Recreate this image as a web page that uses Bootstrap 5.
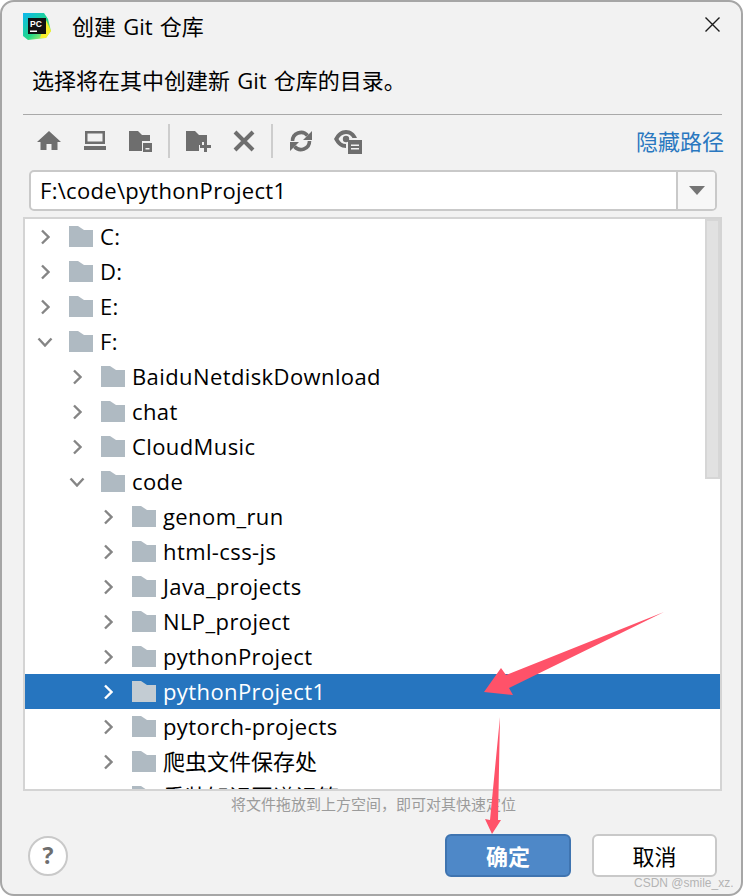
<!DOCTYPE html>
<html lang="zh">
<head>
<meta charset="utf-8">
<title>创建 Git 仓库</title>
<link rel="stylesheet" href="https://cdn.jsdelivr.net/npm/bootstrap@5.3.0/dist/css/bootstrap.min.css">
<style>
html,body{height:896px;margin:0;overflow:hidden;background:#fff}
body{font-family:"Open Sans","Noto Sans CJK SC",sans-serif;font-size:22px;color:#000;position:relative}
.win{width:743px;height:896px;border:2px solid #a6a6a6;border-radius:14px;background:#f2f2f2;overflow:hidden}
.titlebar{height:54px;padding:0 0 0 21px}
.pc-logo{width:28px;height:28px;margin-top:-6px}
.ttl{margin-left:21px;margin-top:-5px;word-spacing:1.5px}
.close-x{position:absolute;left:705px;top:17px;width:15px;height:15px}
.prompt{height:58px;padding:0 0 10px 30px;align-items:center;word-spacing:1.5px}
.rule{height:1px;background:#a9a9a9;margin:0 19px 0 21px}
.tools{height:55px;padding:0 0 3px 35px;margin-right:17px}
.tool{width:24px;height:24px;overflow:visible;color:#6e6e6e}
.tool+.tool{margin-left:22px}
.vsep{width:2px;height:34px;background:#cdcdcd;margin:0 16px 0 15px}
.hide-link{color:#2a78c0;text-decoration:none}
.pathbox{height:41px;margin:0 24px 0 27px;border:2px solid #c9c9c9;border-radius:5px;background:#fff;overflow:hidden}
.pathtxt{padding-left:9px;line-height:37px;letter-spacing:.3px}
.drop{width:39px;border-left:2px solid #c9c9c9;background:#f7f7f7}
.tri{width:0;height:0;border-left:8px solid transparent;border-right:8px solid transparent;border-top:9px solid #757575}
.treebox{height:574px;margin:6px 19px 0 21px;border:2px solid #d4d4d4;background:#fff;overflow:hidden;position:relative}
.rowi{height:35px;line-height:35px;white-space:nowrap;letter-spacing:.4px;color:#000}
.cjk{letter-spacing:0}
.l0{padding-left:15px}.l1{padding-left:47px}.l2{padding-left:78px}
.chev{width:10px;height:16px;flex:none;color:#858585}
.chev-d{width:16px;height:10px;flex:none;margin-left:-3px;margin-right:-3px;color:#858585}
.fold{width:24px;height:21px;flex:none;margin-left:19px;margin-right:7px;color:#afbac2}
.sel{background:#2675bf;color:#fff}
.sel .chev{color:#fff}
.sel .fold{color:#c3ccd3}
.thumb{position:absolute;left:680px;top:0;width:15px;height:260px;background:#e1e1e1;border:2px solid #d6d6d6}
.hint{font-size:15px;color:#9b9b9b;line-height:20px;margin-top:3px;padding-left:229px}
.foot{padding:20px 24px 0 26px}
.helpb{width:40px;height:40px;border-radius:50%;border:2px solid #c9c9c9;background:#fff;color:#6e6e6e;font-weight:700;font-size:23px;line-height:1;padding:0}
.btn-ok,.btn-no{height:43px;border-radius:6px;font-size:22px;line-height:1;padding:0}
.btn-ok{width:126px;background:#4e88c8;border:2px solid #3f74b0;color:#fff;font-weight:700;margin-right:21px}
.btn-no{width:125px;background:#fff;border:2px solid #c9c9c9;color:#000}
.arrows{position:absolute;left:0;top:0;pointer-events:none}
.wm{position:absolute;left:634px;top:875px;font-size:12px;color:#b4b4b4;line-height:16px;font-family:"Liberation Sans",sans-serif}
</style>
</head>
<body>
<svg width="0" height="0" class="position-absolute">
<symbol id="f" viewBox="0 0 24 21"><path d="M0 0h9l6 4h9v17H0z" fill="currentColor"/></symbol>
<symbol id="c" viewBox="0 0 10 16"><path d="M2 1.500 8.500 8 2 14.500" fill="none" stroke="currentColor" stroke-width="2.400"/></symbol>
<symbol id="d" viewBox="0 0 16 10"><path d="M1.500 1.500 8 8.500l6.500-7" fill="none" stroke="currentColor" stroke-width="2.400"/></symbol>
</svg>
<div class="win d-flex flex-column">
  <div class="titlebar d-flex align-items-center">
    <svg class="pc-logo" viewBox="0 0 28 28">
      <defs><linearGradient id="lg" x1="0" y1="0" x2="1" y2="1"><stop offset="0" stop-color="#0db7f0"/><stop offset=".55" stop-color="#21d789"/><stop offset="1" stop-color="#fcf84a"/></linearGradient></defs>
      <path d="M0 1h21l4 6 3 12-5 7-18 2-5-4z" fill="url(#lg)"/>
      <path d="M23 8l5 11-5 7h-6z" fill="#f7ee2e"/>
      <rect x="5" y="6" width="18" height="16" fill="#111"/>
      <rect x="7" y="18.500" width="7" height="1.500" fill="#fff"/>
      <text x="7" y="14.500" font-size="8.500" font-weight="700" fill="#fff" font-family="Liberation Sans">PC</text>
    </svg>
    <span class="ttl">创建 Git 仓库</span>
  </div>
  <svg class="close-x" viewBox="0 0 15 15"><path d="M.5.5l14 14M14.500.5l-14 14" stroke="#1a1a1a" stroke-width="1.400"/></svg>
  <div class="prompt d-flex">选择将在其中创建新 Git 仓库的目录。</div>
  <div class="rule"></div>
  <div class="tools d-flex align-items-center">
    <svg class="tool" viewBox="0 0 24 24"><path d="M12 2 0 13h3.500v8h6v-6h5v6h6v-8H24z" fill="currentColor"/></svg>
    <svg class="tool" viewBox="0 0 24 24"><path d="M2 2h20v13H2zM4.500 4.500v8h15v-8zM1 17h22v4H1z" fill="currentColor" fill-rule="evenodd"/></svg>
    <svg class="tool" viewBox="0 0 24 24"><path d="M0 2h9l4 4h8v6h-8v10H0z" fill="currentColor"/><path d="M14 14h9v9h-9z" fill="currentColor"/><path d="M16.500 19h4v1.500h-4z" fill="#f2f2f2"/></svg>
    <div class="vsep"></div>
    <svg class="tool" viewBox="0 0 24 24"><path d="M0 2h9l4 4h8v7h-5v3h-3v6H0z" fill="currentColor"/><path d="M18 12h3v4h4v3h-4v4h-3v-4h-4v-3h4z" fill="currentColor"/></svg>
    <svg class="tool" viewBox="0 0 24 24"><path d="M3 3l18 18M21 3 3 21" stroke="currentColor" stroke-width="4"/></svg>
    <div class="vsep"></div>
    <svg class="tool" viewBox="0 0 24 24"><path d="M3.500 12a8.500 8.500 0 0 1 15-5.500" fill="none" stroke="currentColor" stroke-width="3.600"/><path d="M20.500 12a8.500 8.500 0 0 1-15 5.500" fill="none" stroke="currentColor" stroke-width="3.600"/><path d="M23 2v9h-9zM1 22v-9h9z" fill="currentColor"/></svg>
    <svg class="tool" viewBox="0 0 24 24"><path d="M-1 10C2 4 6 1 11 1s9 3 11 8h-4.500C16 6.500 14 5 11 5c-3.500 0-6 2.200-7.500 5 1.500 3 4 5 7.500 5v4C6 19 2 16 -1 10z" fill="currentColor"/><circle cx="11" cy="10" r="3.200" fill="currentColor"/><path d="M13 11h14v14H13z" fill="currentColor"/><path d="M16 15.500h8V17h-8zM16 19h8v1.500h-8z" fill="#f2f2f2"/></svg>
    <a href="#" class="hide-link ms-auto">隐藏路径</a>
  </div>
  <div class="pathbox d-flex">
    <div class="pathtxt flex-grow-1">F:\code\pythonProject1</div>
    <div class="drop d-flex align-items-center justify-content-center"><span class="tri"></span></div>
  </div>
  <div class="treebox">
    <div class="thumb"></div>
    <div class="rowi l0 d-flex align-items-center"><svg class="chev"><use href="#c"/></svg><svg class="fold"><use href="#f"/></svg>C:</div>
    <div class="rowi l0 d-flex align-items-center"><svg class="chev"><use href="#c"/></svg><svg class="fold"><use href="#f"/></svg>D:</div>
    <div class="rowi l0 d-flex align-items-center"><svg class="chev"><use href="#c"/></svg><svg class="fold"><use href="#f"/></svg>E:</div>
    <div class="rowi l0 d-flex align-items-center"><svg class="chev-d"><use href="#d"/></svg><svg class="fold"><use href="#f"/></svg>F:</div>
    <div class="rowi l1 d-flex align-items-center"><svg class="chev"><use href="#c"/></svg><svg class="fold"><use href="#f"/></svg>BaiduNetdiskDownload</div>
    <div class="rowi l1 d-flex align-items-center"><svg class="chev"><use href="#c"/></svg><svg class="fold"><use href="#f"/></svg>chat</div>
    <div class="rowi l1 d-flex align-items-center"><svg class="chev"><use href="#c"/></svg><svg class="fold"><use href="#f"/></svg>CloudMusic</div>
    <div class="rowi l1 d-flex align-items-center"><svg class="chev-d"><use href="#d"/></svg><svg class="fold"><use href="#f"/></svg>code</div>
    <div class="rowi l2 d-flex align-items-center"><svg class="chev"><use href="#c"/></svg><svg class="fold"><use href="#f"/></svg>genom_run</div>
    <div class="rowi l2 d-flex align-items-center"><svg class="chev"><use href="#c"/></svg><svg class="fold"><use href="#f"/></svg>html-css-js</div>
    <div class="rowi l2 d-flex align-items-center"><svg class="chev"><use href="#c"/></svg><svg class="fold"><use href="#f"/></svg>Java_projects</div>
    <div class="rowi l2 d-flex align-items-center"><svg class="chev"><use href="#c"/></svg><svg class="fold"><use href="#f"/></svg>NLP_project</div>
    <div class="rowi l2 d-flex align-items-center"><svg class="chev"><use href="#c"/></svg><svg class="fold"><use href="#f"/></svg>pythonProject</div>
    <div class="rowi l2 sel d-flex align-items-center"><svg class="chev"><use href="#c"/></svg><svg class="fold"><use href="#f"/></svg>pythonProject1</div>
    <div class="rowi l2 d-flex align-items-center"><svg class="chev"><use href="#c"/></svg><svg class="fold"><use href="#f"/></svg>pytorch-projects</div>
    <div class="rowi l2 cjk d-flex align-items-center"><svg class="chev"><use href="#c"/></svg><svg class="fold"><use href="#f"/></svg>爬虫文件保存处</div>
    <div class="rowi l2 cjk d-flex align-items-center"><svg class="chev"><use href="#c"/></svg><svg class="fold"><use href="#f"/></svg>重装知识图谱记第</div>
  </div>
  <div class="hint">将文件拖放到上方空间，即可对其快速定位</div>
  <div class="foot d-flex align-items-center">
    <button class="helpb" type="button">?</button>
    <button class="btn-ok ms-auto" type="button">确定</button>
    <button class="btn-no" type="button">取消</button>
  </div>
</div>
<svg class="arrows" width="743" height="896" viewBox="0 0 743 896">
  <path d="M664 612 506 675l-5-7-17 24 29 3-4-7z" fill="#ff5269"/>
  <path d="M500 717 490 820l-5-1 7 15 9-14h-3z" fill="#ff5269"/>
</svg>
<div class="wm">CSDN @smile_xz.</div>
</body>
</html>
